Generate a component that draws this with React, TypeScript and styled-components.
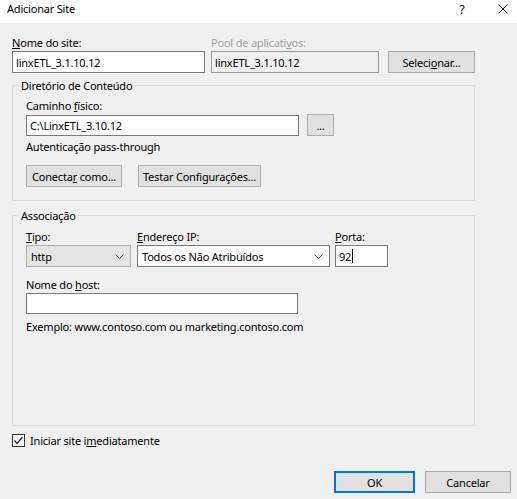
import React from "react";
import styled, { createGlobalStyle, css } from "styled-components";

const GlobalStyle = createGlobalStyle`
  html, body {
    margin: 0;
    padding: 0;
    background: #f0f0f0;
  }
  * {
    box-sizing: border-box;
  }
`;

const Dialog = styled.div`
  width: 517px;
  height: 499px;
  background: #f0f0f0;
  font-family: "Segoe UI", "Noto Sans", sans-serif;
  font-size: 11px;
  letter-spacing: -0.2px;
  color: #000;
  display: flex;
  flex-direction: column;
  overflow: hidden;
`;

const TitleBar = styled.div`
  height: 23px;
  background: #fff;
  display: flex;
  align-items: flex-start;
  padding: 1px 0 0 7px;
`;

const Title = styled.div`
  flex: 1;
  line-height: 15px;
`;

const TitleButton = styled.div<{ $mr?: number }>`
  width: 28px;
  height: 16px;
  margin-right: ${({ $mr }) => $mr ?? 0}px;
  display: flex;
  align-items: center;
  justify-content: center;
  font-size: 12px;
`;

const Body = styled.div`
  flex: 1;
  display: flex;
  flex-direction: column;
  padding: 0 6px 0 12px;
`;

const TopRow = styled.div`
  display: flex;
  align-items: flex-end;
  margin-top: 12px;
`;

const Field = styled.div<{ $w: number; $gap?: number }>`
  width: ${({ $w }) => $w}px;
  margin-right: ${({ $gap }) => $gap ?? 0}px;
  display: flex;
  flex-direction: column;
`;

const Label = styled.label<{ $disabled?: boolean }>`
  line-height: 15px;
  height: 15px;
  margin-bottom: 1px;
  color: ${({ $disabled }) => ($disabled ? "#a0a0a0" : "#000")};
  white-space: nowrap;
`;

const Input = styled.div<{ $disabled?: boolean; $h?: number }>`
  height: ${({ $h }) => $h ?? 22}px;
  border: 1px solid #7a7a7a;
  background: #fff;
  padding: 0 3px;
  display: flex;
  align-items: center;
  white-space: nowrap;
  ${({ $disabled }) =>
    $disabled &&
    css`
      background: #f0f0f0;
      border-color: #9a9a9a;
    `}
`;

const Caret = styled.span`
  display: inline-block;
  width: 1px;
  height: 14px;
  background: #000;
  margin-left: 1px;
`;

const Button = styled.div<{ $w: number; $default?: boolean }>`
  width: ${({ $w }) => $w}px;
  height: 22px;
  background: #e1e1e1;
  border: 1px solid #adadad;
  display: flex;
  align-items: center;
  justify-content: center;
  white-space: nowrap;
  ${({ $default }) =>
    $default &&
    css`
      border: 2px solid #0078d7;
    `}
`;

const Group = styled.fieldset<{ $h: number; $mt: number }>`
  margin: ${({ $mt }) => $mt}px 0 0 0;
  width: 463px;
  height: ${({ $h }) => $h}px;
  border: 1px solid #dcdcdc;
  padding: 0 0 0 13px;
  display: flex;
  flex-direction: column;
`;

const Legend = styled.legend`
  padding: 0 2px;
  margin-left: -7px;
  line-height: 15px;
`;

const Row = styled.div<{ $mt?: number }>`
  display: flex;
  align-items: flex-end;
  margin-top: ${({ $mt }) => $mt ?? 0}px;
`;

const Text = styled.div<{ $mt?: number }>`
  line-height: 15px;
  margin-top: ${({ $mt }) => $mt ?? 0}px;
`;

const Select = styled.div<{ $gray?: boolean }>`
  height: 22px;
  border: 1px solid ${({ $gray }) => ($gray ? "#adadad" : "#7a7a7a")};
  background: ${({ $gray }) => ($gray ? "#e5e5e5" : "#fff")};
  padding: 0 6px 0 4px;
  display: flex;
  align-items: center;
  justify-content: space-between;
  white-space: nowrap;
`;

const CheckRow = styled.div`
  display: flex;
  align-items: center;
  margin-top: 7px;
  height: 15px;
`;

const Box = styled.div`
  width: 13px;
  height: 13px;
  border: 1px solid #333;
  background: #fff;
  margin-right: 5px;
  display: flex;
  align-items: center;
  justify-content: center;
`;

const Footer = styled.div`
  display: flex;
  justify-content: flex-end;
  gap: 10px;
  margin-top: 23px;
`;

const Chevron = () => (
  <svg width="9" height="5" viewBox="0 0 9 5">
    <polyline points="0.5,0.5 4.5,4.5 8.5,0.5" fill="none" stroke="#555" strokeWidth="1" />
  </svg>
);

export default function App() {
  return (
    <>
      <GlobalStyle />
      <Dialog>
        <TitleBar>
          <Title>Adicionar Site</Title>
          <TitleButton $mr={13}>?</TitleButton>
          <TitleButton>
            <svg width="10" height="10" viewBox="0 0 10 10">
              <path d="M0.5 0.5 L9.5 9.5 M9.5 0.5 L0.5 9.5" stroke="#000" strokeWidth="1" />
            </svg>
          </TitleButton>
        </TitleBar>
        <Body>
          <TopRow>
            <Field $w={193} $gap={6}>
              <Label>
                <u>N</u>ome do site:
              </Label>
              <Input>linxETL_3.1.10.12</Input>
            </Field>
            <Field $w={168} $gap={9}>
              <Label $disabled>
                Pool de aplicati<u>v</u>os:
              </Label>
              <Input $disabled>linxETL_3.1.10.12</Input>
            </Field>
            <Button $w={87}>
              <span>
                Seleci<u>o</u>nar...
              </span>
            </Button>
          </TopRow>

          <Group $h={123} $mt={5}>
            <Legend>Diretório de Conteúdo</Legend>
            <Text $mt={5}>
              Caminho <u>f</u>ísico:
            </Text>
            <Row $mt={1}>
              <Field $w={273} $gap={8}>
                <Input $h={21}>C:\LinxETL_3.10.12</Input>
              </Field>
              <Button $w={27}>...</Button>
            </Row>
            <Text $mt={3}>Autenticação pass-through</Text>
            <Row $mt={11}>
              <Field $w={96} $gap={16}>
                <Button $w={96}>
                  <span>
                    Conecta<u>r</u> como...
                  </span>
                </Button>
              </Field>
              <Button $w={123}>Testar Configurações...</Button>
            </Row>
          </Group>

          <Group $h={218} $mt={7}>
            <Legend>Associação</Legend>
            <Row $mt={6}>
              <Field $w={105} $gap={6}>
                <Label>
                  <u>T</u>ipo:
                </Label>
                <Select $gray>
                  <span>http</span>
                  <Chevron />
                </Select>
              </Field>
              <Field $w={193} $gap={5}>
                <Label>
                  <u>E</u>ndereço IP:
                </Label>
                <Select>
                  <span>Todos os Não Atribuídos</span>
                  <Chevron />
                </Select>
              </Field>
              <Field $w={53}>
                <Label>
                  <u>P</u>orta:
                </Label>
                <Input>
                  92
                  <Caret />
                </Input>
              </Field>
            </Row>
            <Row $mt={10}>
              <Field $w={272}>
                <Label>
                  Nome do <u>h</u>ost:
                </Label>
                <Input $h={21} />
              </Field>
            </Row>
            <Text $mt={5}>Exemplo: www.contoso.com ou marketing.contoso.com</Text>
          </Group>

          <CheckRow>
            <Box>
              <svg width="11" height="11" viewBox="0 0 11 11">
                <polyline points="1.5,5.5 4,8.5 9.5,2" fill="none" stroke="#222" strokeWidth="1.2" />
              </svg>
            </Box>
            <span>
              Iniciar site i<u>m</u>ediatamente
            </span>
          </CheckRow>

          <Footer>
            <Button $w={81} $default>
              OK
            </Button>
            <Button $w={86}>Cancelar</Button>
          </Footer>
        </Body>
      </Dialog>
    </>
  );
}
